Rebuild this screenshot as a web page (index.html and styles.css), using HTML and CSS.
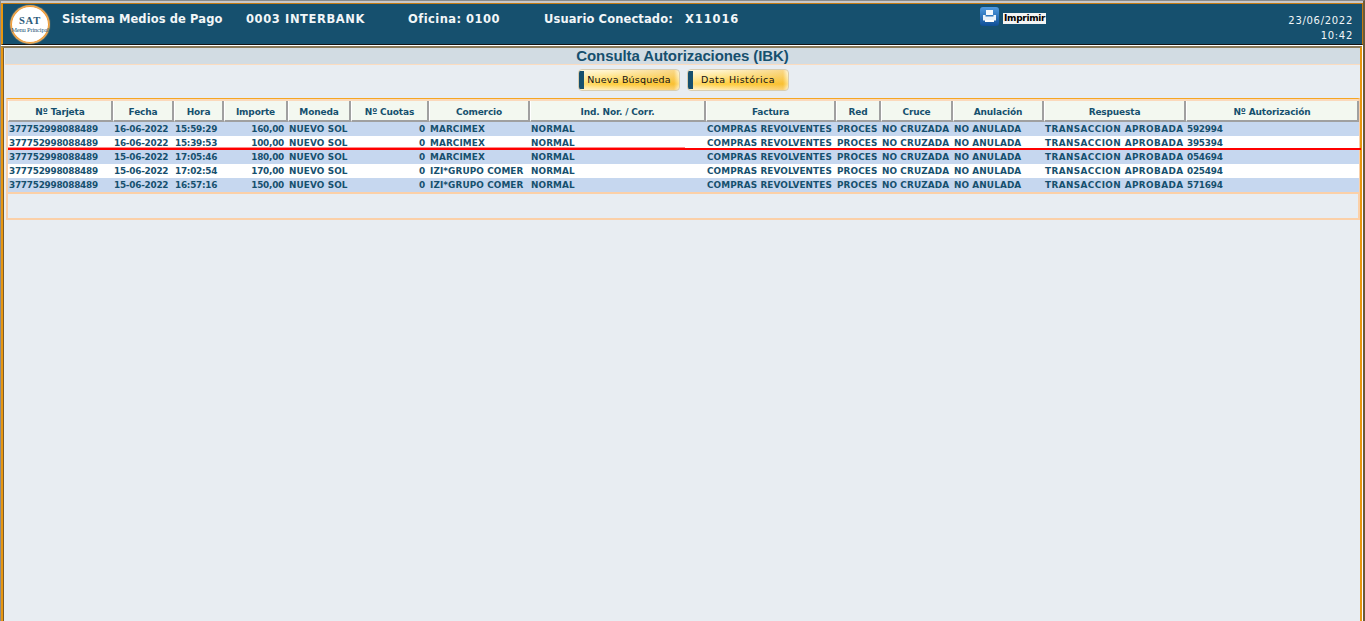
FILE: index.html
```html
<!DOCTYPE html>
<html lang="es">
<head>
<meta charset="utf-8">
<title>Consulta Autorizaciones (IBK)</title>
<link rel="stylesheet" href="styles.css">
</head>
<body>
<div class="frame">
  <header class="top">
    <div class="logo"><span class="logo-sat">SAT</span><span class="logo-menu">Menu Principal</span></div>
    <span class="top-item sys">Sistema Medios de Pago</span>
    <span class="top-item bank">0003 INTERBANK</span>
    <span class="top-item office">Oficina: 0100</span>
    <span class="top-item user">Usuario Conectado:</span>
    <span class="top-item userid">X11016</span>
    <div class="print">
      <svg class="print-icon" width="19" height="19" viewBox="0 0 19 19" aria-hidden="true">
        <defs><linearGradient id="pg" x1="0" y1="0" x2="0" y2="1"><stop offset="0" stop-color="#4f9ae0"/><stop offset="1" stop-color="#0f4f96"/></linearGradient></defs>
        <rect x="0" y="0" width="19" height="19" rx="3" fill="url(#pg)"/>
        <path d="M6 3h7v5H6z" fill="#f4f8fc"/>
        <path d="M3 8h2.500v1.500h8V8H16v5.500H3z" fill="#eaf2fa"/>
        <path d="M5 13h9v2H5z" fill="#ffffff"/>
      </svg>
      <span class="print-label">Imprimir</span>
    </div>
    <div class="stamp"><span>23/06/2022</span><span>10:42</span></div>
  </header>
  <main class="content">
    <h1 class="title">Consulta Autorizaciones (IBK)</h1>
    <div class="actions">
      <button class="btn">Nueva Búsqueda</button>
      <button class="btn wide">Data Histórica</button>
    </div>
    <section class="panel">
      <table class="grid">
        <colgroup>
          <col class="c1"><col class="c2"><col class="c3"><col class="c4"><col class="c5"><col class="c6"><col class="c7"><col class="c8"><col class="c9"><col class="c10"><col class="c11"><col class="c12"><col class="c13"><col class="c14">
        </colgroup>
        <thead>
          <tr><th>Nº Tarjeta</th><th>Fecha</th><th>Hora</th><th>Importe</th><th>Moneda</th><th>Nº Cuotas</th><th>Comercio</th><th>Ind. Nor. / Corr.</th><th>Factura</th><th>Red</th><th>Cruce</th><th>Anulación</th><th>Respuesta</th><th>Nº Autorización</th></tr>
        </thead>
        <tbody>
          <tr class="odd"><td>377752998088489</td><td>16-06-2022</td><td>15:59:29</td><td class="num">160,00</td><td class="t">NUEVO SOL</td><td class="num">0</td><td class="t">MARCIMEX</td><td class="t">NORMAL</td><td class="t">COMPRAS REVOLVENTES</td><td class="t">PROCES</td><td class="t">NO CRUZADA</td><td class="t">NO ANULADA</td><td class="r">TRANSACCION APROBADA</td><td>592994</td></tr>
          <tr><td>377752998088489</td><td>16-06-2022</td><td>15:39:53</td><td class="num">100,00</td><td class="t">NUEVO SOL</td><td class="num">0</td><td class="t">MARCIMEX</td><td class="t">NORMAL</td><td class="t">COMPRAS REVOLVENTES</td><td class="t">PROCES</td><td class="t">NO CRUZADA</td><td class="t">NO ANULADA</td><td class="r">TRANSACCION APROBADA</td><td>395394</td></tr>
          <tr class="odd"><td>377752998088489</td><td>15-06-2022</td><td>17:05:46</td><td class="num">180,00</td><td class="t">NUEVO SOL</td><td class="num">0</td><td class="t">MARCIMEX</td><td class="t">NORMAL</td><td class="t">COMPRAS REVOLVENTES</td><td class="t">PROCES</td><td class="t">NO CRUZADA</td><td class="t">NO ANULADA</td><td class="r">TRANSACCION APROBADA</td><td>054694</td></tr>
          <tr><td>377752998088489</td><td>15-06-2022</td><td>17:02:54</td><td class="num">170,00</td><td class="t">NUEVO SOL</td><td class="num">0</td><td class="t">IZI*GRUPO COMER</td><td class="t">NORMAL</td><td class="t">COMPRAS REVOLVENTES</td><td class="t">PROCES</td><td class="t">NO CRUZADA</td><td class="t">NO ANULADA</td><td class="r">TRANSACCION APROBADA</td><td>025494</td></tr>
          <tr class="odd"><td>377752998088489</td><td>15-06-2022</td><td>16:57:16</td><td class="num">150,00</td><td class="t">NUEVO SOL</td><td class="num">0</td><td class="t">IZI*GRUPO COMER</td><td class="t">NORMAL</td><td class="t">COMPRAS REVOLVENTES</td><td class="t">PROCES</td><td class="t">NO CRUZADA</td><td class="t">NO ANULADA</td><td class="r">TRANSACCION APROBADA</td><td>571694</td></tr>
        </tbody>
      </table>
      <div class="grid-foot"></div>
    </section>
  </main>
  <div class="redline"></div>
</div>
</body>
</html>
```
FILE: styles.css
```css
* { box-sizing: border-box; }
html, body { margin: 0; padding: 0; background: #fff; }
body { height: 621px; overflow: hidden; font-family: "DejaVu Sans", Verdana, sans-serif; }
.frame {
  position: relative;
  height: 621px;
  display: flex;
  flex-direction: column;
  border-left: 1px solid #8a8a8a;
  border-right: 2px solid #6b5a3a;
  border-top: 1px solid #8a8a8a;
  padding-top: 2px;
  background: #fff;
  box-shadow: inset 0 2px 0 #c9c9c9;
}
.top {
  height: 42px;
  flex: none;
  display: flex;
  align-items: flex-start;
  background: #16506e;
  border-top: 1px solid #c27a14;
  border-left: 2px solid #e8960f;
  border-right: 1px solid #c27a14;
  border-bottom: 1px solid #141414;
  color: #f2f6f8;
}
.logo {
  width: 38px;
  height: 37px;
  margin: 2px 1px 0 8px;
  flex: none;
  border-radius: 50%;
  background: #fff;
  border: 1px solid #f09a30;
  box-shadow: 0 0 1px 1px #f4b060;
  display: flex;
  flex-direction: column;
  align-items: center;
  justify-content: center;
  font-family: "Liberation Serif", serif;
  color: #2b5a7a;
}
.logo-sat { font-size: 10.500px; font-weight: bold; line-height: 11px; letter-spacing: .8px; }
.logo-menu { font-size: 6.500px; line-height: 8px; white-space: nowrap; letter-spacing: -.2px; }
.top-item { font-size: 11.500px; font-weight: bold; line-height: 14px; margin-top: 8px; white-space: nowrap; }
.sys { margin-left: 12px; width: 184px; letter-spacing: .1px; }
.bank { width: 162px; letter-spacing: .6px; }
.office { width: 136px; letter-spacing: .45px; }
.user { width: 141px; letter-spacing: .12px; }
.userid { width: 60px; letter-spacing: .9px; }
.print { display: flex; align-items: flex-start; margin-left: 235px; }
.print-icon { margin-top: 3px; display: block; }
.print-label {
  margin: 9px 0 0 4px;
  background: #f4f4f4;
  color: #000;
  font-size: 9px;
  font-weight: bold;
  line-height: 11px;
  height: 11px;
  letter-spacing: -.3px;
  padding: 0 1px;
}
.stamp {
  margin-left: auto;
  padding: 9px 9px 0 0;
  display: flex;
  flex-direction: column;
  align-items: flex-end;
  font-size: 10px;
  line-height: 15px;
  letter-spacing: .7px;
}
.content {
  flex: 1;
  background: #e8edf2;
  margin: 1px 1px 0 0;
  border-top: 2px solid #8a7a5a;
  border-left: 2px solid #e8960f;
  border-right: 2px solid #e8960f;
  padding-left: 2px;
  box-shadow: inset 1px 0 0 #7a5a2a;
  display: flex;
  flex-direction: column;
  min-height: 0;
}
.title {
  margin: 0;
  height: 17px;
  flex: none;
  background: #d2dce3;
  border-bottom: 1px solid #fbdcc0;
  color: #16506e;
  font: bold 15px/16px "Liberation Sans", Arial, sans-serif;
  letter-spacing: -.1px;
  text-align: center;
}
.actions { height: 33px; flex: none; display: flex; justify-content: center; gap: 7px; padding: 4px 0 0 2px; }
.btn {
  width: 102px;
  height: 22px;
  border: 1px solid #d8cdb0;
  border-radius: 4px;
  padding: 0;
  color: #111;
  font: 9.500px/12px "DejaVu Sans", Verdana, sans-serif;
  letter-spacing: .2px;
  background:
    linear-gradient(#16506e, #16506e) 0 1px / 5px 18px no-repeat,
    linear-gradient(90deg, rgba(255,255,255,.3), rgba(255,255,255,0) 30%, rgba(240,170,30,.4) 95%, rgba(255,255,255,.4)),
    linear-gradient(#fff6d2, #ffe58c 35%, #ffcf3f 70%, #ffedb8);
}
.wide { letter-spacing: .45px; }
.panel {
  flex: none;
  height: 122px;
  margin-left: 1px;
  border-top: 1px solid #f5a623;
  border-left: 2px solid #fbd0a8;
  border-right: 2px solid #fbd0a8;
  border-bottom: 2px solid #fbd0a8;
  padding-top: 2px;
  box-shadow: inset 0 2px 0 #fbd9bb;
}
.grid { table-layout: fixed; border-collapse: separate; border-spacing: 0; width: 1351px; }
.c1 { width: 105px; } .c2 { width: 61px; } .c3 { width: 50px; } .c4 { width: 64px; }
.c5 { width: 63px; } .c6 { width: 78px; } .c7 { width: 101px; } .c8 { width: 176px; }
.c9 { width: 130px; } .c10 { width: 45px; } .c11 { width: 72px; } .c12 { width: 91px; }
.c13 { width: 142px; } .c14 { width: 173px; }
th {
  height: 21px;
  padding: 2px 0 0;
  background: #f3f8f0;
  border-left: 1px solid #fff;
  border-right: 2px solid #a0a0a0;
  border-bottom: 2px solid #a0a0a0;
  color: #16506e;
  font-size: 9px;
  font-weight: bold;
  letter-spacing: -.15px;
  text-align: center;
  white-space: nowrap;
}
td {
  height: 14px;
  padding: 0 0 0 1px;
  color: #16506e;
  font-size: 8.900px;
  line-height: 14px;
  font-weight: bold;
  letter-spacing: -.25px;
  white-space: nowrap;
  overflow: hidden;
}
td.t { letter-spacing: .1px; }
td.r { letter-spacing: .4px; }
td.num { text-align: right; padding-right: 4px; }
tbody tr { background: #fff; }
tbody tr.odd { background: #c6d7ef; }
.grid-foot { height: 2px; background: #fbd0a8; }
.redline {
  position: absolute;
  left: 7px;
  right: 2px;
  top: 147px;
  height: 2px;
  background: #ff0000;
}
.redline::before {
  content: "";
  position: absolute;
  left: 0;
  top: -1px;
  width: 677px;
  height: 1px;
  background: rgba(255, 0, 0, .45);
}
```
